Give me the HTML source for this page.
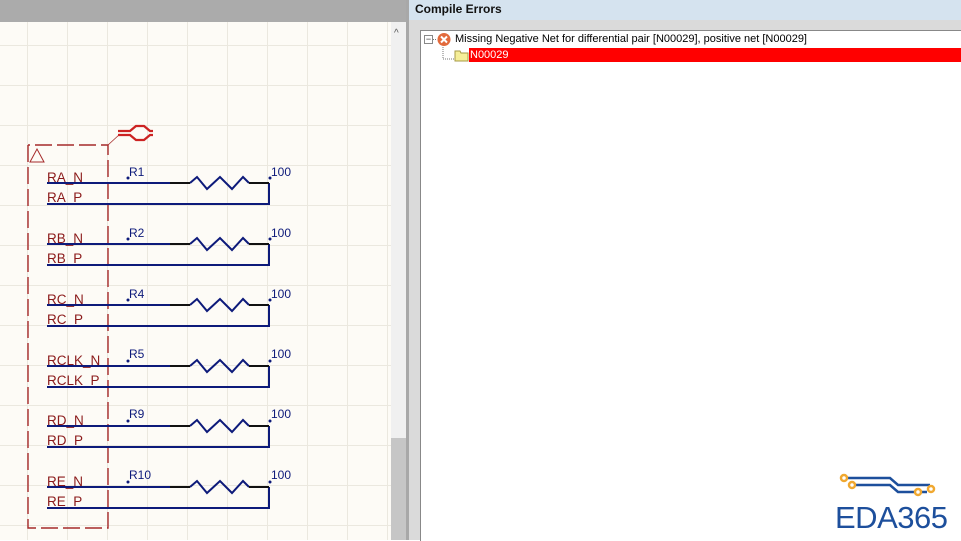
<!DOCTYPE html>
<html><head><meta charset="utf-8"><style>
body{margin:0;width:961px;height:540px;overflow:hidden;position:relative;font-family:"Liberation Sans",sans-serif;background:#fff}
.a{position:absolute}
</style></head><body>
<div class="a" style="left:0;top:0;width:409px;height:22px;background:#ababab"></div>
<div class="a" style="left:0;top:22px;width:391px;height:518px;background:#fdfbf6;background-image:linear-gradient(#ebe8df 1px,transparent 1px),linear-gradient(90deg,#ebe8df 1px,transparent 1px);background-size:40px 40px;background-position:27px 23px"></div>
<div class="a" style="left:391px;top:22px;width:15px;height:518px;background:#f0f0f0"></div>
<div class="a" style="left:391px;top:438px;width:15px;height:102px;background:#c6c6c6"></div>
<div class="a" style="left:394px;top:28px;font-size:10px;color:#555">^</div>
<div class="a" style="left:406px;top:0;width:3px;height:540px;background:#a8a8a8"></div>
<div class="a" style="left:409px;top:0;width:552px;height:20px;background:#d5e3ef"></div>
<div class="a" style="left:415px;top:2px;font-size:12px;font-weight:bold;color:#111">Compile Errors</div>
<div class="a" style="left:409px;top:20px;width:552px;height:520px;background:#dadada"></div>
<div class="a" style="left:420px;top:30px;width:541px;height:510px;background:#fff;border-left:1px solid #888;border-top:1px solid #888"></div>
<div class="a" style="left:424px;top:35px;width:7px;height:7px;border:1px solid #888;background:#fff;font-size:9px;line-height:7px;text-align:center;color:#333">−</div>
<svg class="a" style="left:430px;top:32px" width="40" height="30">
<path d="M3 7.5h4M13 15v12h12" stroke="#777" stroke-dasharray="1 1" fill="none"/>
<circle cx="14" cy="7.5" r="6.5" fill="#e26a3c"/><path d="M11 4.5l6 6M17 4.5l-6 6" stroke="#fff" stroke-width="2"/>
<path d="M25 19h5l1 2h7v8h-13z" fill="#f5ee98" stroke="#a69a45"/>
</svg>
<div class="a" style="left:455px;top:33px;font-size:11px;color:#000">Missing Negative Net for differential pair [N00029], positive net [N00029]</div>
<div class="a" style="left:469px;top:48px;width:492px;height:14px;background:#f00;color:#fff;font-size:11px;line-height:14px;padding-left:1px">N00029</div>
<svg class="a" style="left:0;top:0" width="391" height="540">
<g stroke="#a52a2a" fill="none" stroke-width="1.4">
<path d="M28 145v383h80V145H28" stroke-dasharray="17 5"/>
<path d="M30 162l7-13 7 13z" stroke-width="1"/>
<path d="M108 145l12-11" stroke-width="0.8"/>
<path d="M118 131h12l6-5h8l6 5h3M118 135h12l6 5h8l6-5h3" stroke="#c22" stroke-width="2.3"/>
</g>
<g font-size="13.5" fill="#8b1a1a">
<text x="47" y="182">RA_N</text><text x="47" y="202">RA_P</text>
<text x="47" y="243">RB_N</text><text x="47" y="263">RB_P</text>
<text x="47" y="304">RC_N</text><text x="47" y="324">RC_P</text>
<text x="47" y="365">RCLK_N</text><text x="47" y="385">RCLK_P</text>
<text x="47" y="425">RD_N</text><text x="47" y="445">RD_P</text>
<text x="47" y="486">RE_N</text><text x="47" y="506">RE_P</text>
</g>
<g font-size="12" fill="#0d1a7a">
<text x="129" y="176">R1</text><text x="129" y="237">R2</text><text x="129" y="298">R4</text><text x="129" y="358">R5</text><text x="129" y="418">R9</text><text x="129" y="479">R10</text>
<text x="271" y="176">100</text><text x="271" y="237">100</text><text x="271" y="298">100</text><text x="271" y="358">100</text><text x="271" y="418">100</text><text x="271" y="479">100</text>
</g>
<g stroke-width="2" fill="none">
<g transform="translate(0,183)"><path d="M47 0H170M190 0l7-6 10 12 13-12 12 12 11-12 6 6M269 0v21H47" stroke="#0d1a7a"/><path d="M170 0h20M249 0h20" stroke="#111"/><circle cx="128" cy="-5" r="1.5" fill="#0d1a7a"/><circle cx="270" cy="-5" r="1.5" fill="#0d1a7a"/></g>
<g transform="translate(0,244)"><path d="M47 0H170M190 0l7-6 10 12 13-12 12 12 11-12 6 6M269 0v21H47" stroke="#0d1a7a"/><path d="M170 0h20M249 0h20" stroke="#111"/><circle cx="128" cy="-5" r="1.5" fill="#0d1a7a"/><circle cx="270" cy="-5" r="1.5" fill="#0d1a7a"/></g>
<g transform="translate(0,305)"><path d="M47 0H170M190 0l7-6 10 12 13-12 12 12 11-12 6 6M269 0v21H47" stroke="#0d1a7a"/><path d="M170 0h20M249 0h20" stroke="#111"/><circle cx="128" cy="-5" r="1.5" fill="#0d1a7a"/><circle cx="270" cy="-5" r="1.5" fill="#0d1a7a"/></g>
<g transform="translate(0,366)"><path d="M47 0H170M190 0l7-6 10 12 13-12 12 12 11-12 6 6M269 0v21H47" stroke="#0d1a7a"/><path d="M170 0h20M249 0h20" stroke="#111"/><circle cx="128" cy="-5" r="1.5" fill="#0d1a7a"/><circle cx="270" cy="-5" r="1.5" fill="#0d1a7a"/></g>
<g transform="translate(0,426)"><path d="M47 0H170M190 0l7-6 10 12 13-12 12 12 11-12 6 6M269 0v21H47" stroke="#0d1a7a"/><path d="M170 0h20M249 0h20" stroke="#111"/><circle cx="128" cy="-5" r="1.5" fill="#0d1a7a"/><circle cx="270" cy="-5" r="1.5" fill="#0d1a7a"/></g>
<g transform="translate(0,487)"><path d="M47 0H170M190 0l7-6 10 12 13-12 12 12 11-12 6 6M269 0v21H47" stroke="#0d1a7a"/><path d="M170 0h20M249 0h20" stroke="#111"/><circle cx="128" cy="-5" r="1.5" fill="#0d1a7a"/><circle cx="270" cy="-5" r="1.5" fill="#0d1a7a"/></g>
</g>
</svg>
<svg class="a" style="left:830px;top:470px" width="120" height="30">
<path d="M14 8h46l8 7h32M22 15h38l8 7h29" stroke="#1d4f9c" stroke-width="2.5" fill="none"/>
<g fill="#fff" stroke="#f0a830" stroke-width="2.5"><circle cx="14" cy="8" r="3"/><circle cx="22" cy="15" r="3"/><circle cx="88" cy="22" r="3"/><circle cx="101" cy="19" r="3"/></g>
</svg>
<div class="a" style="left:835px;top:500px;font-size:31px;color:#1d4f9c;letter-spacing:-0.5px">EDA365</div>
</body></html>
